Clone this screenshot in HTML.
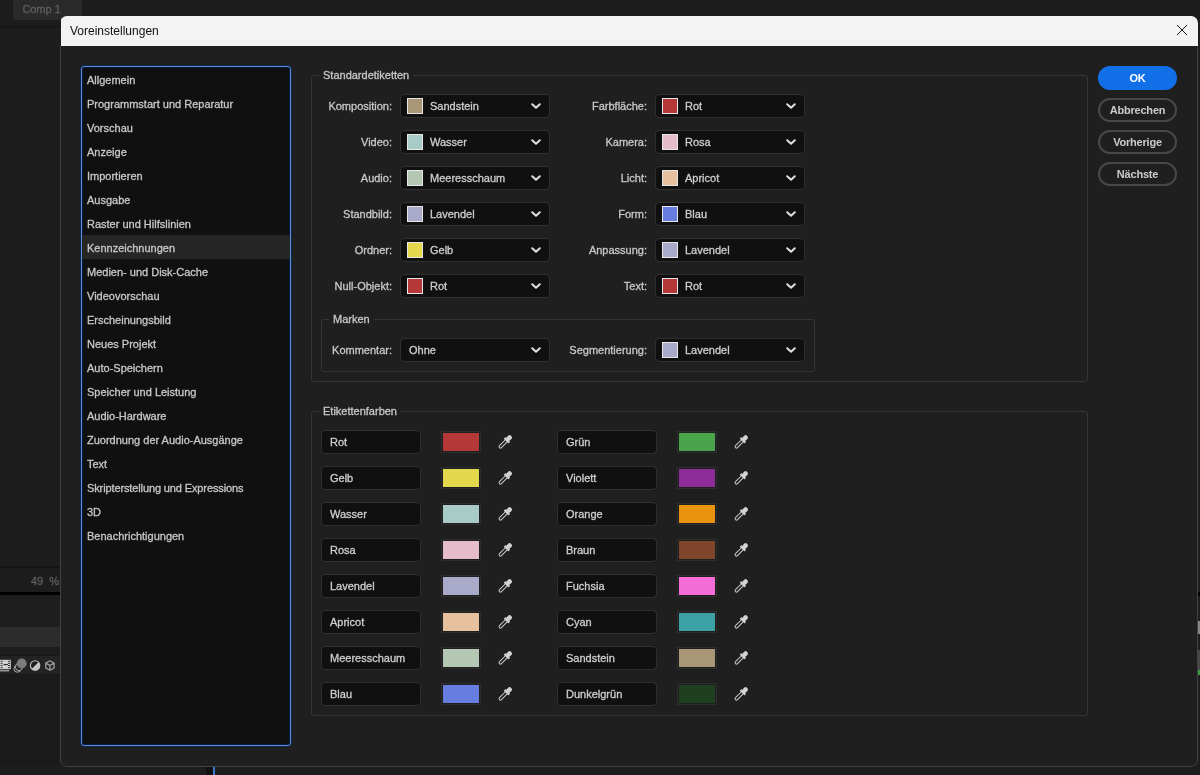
<!DOCTYPE html>
<html lang="de">
<head>
<meta charset="utf-8">
<title>Voreinstellungen</title>
<style>
*{box-sizing:border-box;margin:0;padding:0}
html,body{width:1200px;height:775px;overflow:hidden;background:#1d1d1d;font-family:"Liberation Sans",sans-serif;font-size:11px;color:#c9c9c9}
#root{position:absolute;left:0;top:0;width:1200px;height:775px;will-change:transform;-webkit-text-stroke-width:0.3px}
.abs{position:absolute}
#bg{position:absolute;left:0;top:0;width:1200px;height:775px;background:#1d1d1d;overflow:hidden}
#dlg{position:absolute;left:60px;top:16px;width:1137.5px;height:750.5px;background:#1f1f1f;border-radius:7px;overflow:hidden}
#frame{position:absolute;left:0;top:30px;right:0;bottom:0;border:1px solid #424242;border-top:none;border-radius:0 0 7px 7px}
#title{-webkit-text-stroke-width:0;position:absolute;left:1px;top:0;width:100%;height:30px;background:#f3f3f3;color:#111;font-size:12px;line-height:30px;padding-left:9px}
#side{position:absolute;left:81px;top:66px;width:210px;height:680px;background:#101010;border:1px solid #5a8fd8;border-radius:3px;overflow:hidden;box-shadow:0 0 0 1px rgba(0,40,105,.55),inset 0 0 0 1px rgba(0,35,95,.55)}
#side div{height:24px;line-height:26px;padding-left:5px;color:#c8c8c8;white-space:nowrap;margin-top:0}
#side div.sel{background:#262626}
.fs{position:absolute;border:1px solid #353535;border-radius:3px}
.lg{position:absolute;background:#1f1f1f;padding:0 4px;line-height:14px;height:14px;color:#c8c8c8;white-space:nowrap}
.lbl{position:absolute;text-align:right;white-space:nowrap;line-height:24px;height:24px;color:#c8c8c8}
.dd{position:absolute;width:150px;height:24px;background:#101010;border:1px solid #2f2f2f;border-radius:4px;line-height:23px;color:#cecece;white-space:nowrap}
.dd i{position:absolute;left:6px;top:3px;width:16px;height:16px;border:1px solid #e6e6e6}
.dd span{position:absolute;left:29px;top:0}
.dd svg{position:absolute;right:8px;top:8px}
.inp{position:absolute;width:100px;height:24px;background:#101010;border:1px solid #2f2f2f;border-radius:4px;line-height:23px;padding-left:8px;color:#cecece}
.sw{position:absolute;width:40px;height:22px;border:1px solid #2d2d2d;padding:1px;background:#1f1f1f}
.sw b{display:block;width:100%;height:100%}
.ed{position:absolute;width:16px;height:16px}
.btn{-webkit-text-stroke-width:0;position:absolute;left:1098px;width:79px;height:24px;border:2px solid #484848;border-radius:12px;text-align:center;line-height:20px;font-weight:bold;color:#cbcbcb;font-size:11px;letter-spacing:-0.2px}
.btn.ok{background:#1170e8;border-color:#1170e8;color:#fff}
</style>
</head>
<body>
<div id="root">
<div id="bg"><div class="abs" style="left:0;top:0;width:1200px;height:27px;background:#1c1c1c"></div>
<div class="abs" style="left:13px;top:0;width:69px;height:20px;background:#2a2a2a;border-radius:0 0 3px 3px;color:#5e5e5e;font-size:11px;line-height:19px;padding-left:9.5px;letter-spacing:-0.1px">Comp 1</div>
<div class="abs" style="left:0;top:26px;width:1200px;height:2px;background:#161616"></div>
<div class="abs" style="left:0;top:28px;width:61px;height:747px;background:#1d1d1d"></div>
<div class="abs" style="left:0;top:566px;width:61px;height:2px;background:#141414"></div>
<div class="abs" style="left:31px;top:575px;color:#5e5e5e;font-size:11px;white-space:nowrap">49&nbsp;&nbsp;%</div>
<div class="abs" style="left:0;top:592px;width:61px;height:4px;background:#000"></div>
<div class="abs" style="left:0;top:595px;width:61px;height:32px;background:#1e1e1e"></div>
<div class="abs" style="left:0;top:627px;width:61px;height:20px;background:#2c2c2c"></div>
<div class="abs" style="left:0;top:647px;width:61px;height:8px;background:#1e1e1e"></div>
<div class="abs" style="left:0;top:655px;width:61px;height:20px;background:#232323;border-top:1px solid #171717;border-bottom:1px solid #171717"></div>
<div class="abs" style="left:0;top:675px;width:61px;height:100px;background:#1b1b1b"></div>
<svg class="abs" style="left:0;top:650px" width="61" height="32" viewBox="0 0 61 32"><rect x="-1" y="9.8" width="11.8" height="9.4" fill="#cfcfcf"/><rect x="-1" y="20.3" width="10.2" height="1" fill="#cfcfcf"/><path d="M0.6 11.3h2M0.6 13.4h2M0.6 15.5h2M0.6 17.6h2M8 11.3h2M8 13.4h2M8 15.5h2M8 17.6h2" stroke="#3a3a3a" stroke-width="1"/><rect x="3.6" y="14" width="4.2" height="1.1" fill="#2a2a2a"/><circle cx="17.4" cy="18.8" r="3.4" fill="none" stroke="#a8a8a8" stroke-width="1"/><circle cx="19" cy="17" r="3.6" fill="#232323" stroke="#a8a8a8" stroke-width="1"/><circle cx="21.7" cy="13.5" r="4.9" fill="#7c7c7c"/><circle cx="35.1" cy="15.5" r="4.7" fill="#1e1e1e" stroke="#c4c4c4" stroke-width="1.1"/><path d="M38.6 12 A4.95 4.95 0 0 1 31.6 19 Z" fill="#c4c4c4"/><path d="M49.9 10.8 L54.1 13.1 L54.1 17.9 L49.9 20.2 L45.7 17.9 L45.7 13.1 Z M45.7 13.1 L49.9 15.4 L54.1 13.1 M49.9 15.4 L49.9 20.2" fill="none" stroke="#9a9a9a" stroke-width="1.3" stroke-linejoin="round"/></svg>
<div class="abs" style="left:1197px;top:28px;width:3px;height:747px;background:#1e1e1e"></div>
<div class="abs" style="left:1197px;top:592px;width:3px;height:4px;background:#000"></div>
<div class="abs" style="left:1197px;top:621px;width:3px;height:13px;background:#868686"></div>
<div class="abs" style="left:1197px;top:650px;width:3px;height:20px;background:#484848"></div>
<div class="abs" style="left:1197px;top:670px;width:3px;height:5px;background:#3a9c40"></div>
<div class="abs" style="left:0;top:766px;width:1200px;height:9px;background:#1d1d1d"></div>
<div class="abs" style="left:206px;top:766px;width:7px;height:9px;background:#111"></div>
<div class="abs" style="left:213px;top:766px;width:2px;height:9px;background:#3a78cf"></div></div>
<div id="dlg"><div id="frame"></div><div id="title">Voreinstellungen</div><svg style="position:absolute;left:1116px;top:8px" width="12" height="12" viewBox="0 0 12 12"><path d="M1 1 L11 11 M11 1 L1 11" stroke="#111" stroke-width="0.95" fill="none"/></svg></div>
<div id="side">
<div>Allgemein</div><div>Programmstart und Reparatur</div><div>Vorschau</div><div>Anzeige</div><div>Importieren</div><div>Ausgabe</div><div>Raster und Hilfslinien</div><div class="sel">Kennzeichnungen</div><div>Medien- und Disk-Cache</div><div>Videovorschau</div><div>Erscheinungsbild</div><div>Neues Projekt</div><div>Auto-Speichern</div><div>Speicher und Leistung</div><div>Audio-Hardware</div><div>Zuordnung der Audio-Ausgänge</div><div>Text</div><div style="letter-spacing:-0.12px">Skripterstellung und Expressions</div><div>3D</div><div>Benachrichtigungen</div>
</div>
<div class="fs" style="left:311px;top:75px;width:777px;height:307px"></div>
<div class="lg" style="left:319px;top:68px">Standardetiketten</div>
<div class="lbl" style="left:272px;width:120px;top:94px">Komposition:</div>
<div class="dd" style="left:400px;top:94px"><i style="background:#a89677"></i><span>Sandstein</span><svg width="10" height="6" viewBox="0 0 10 6"><path d="M1.2 1.2 L5 4.8 L8.8 1.2" fill="none" stroke="#dedede" stroke-width="2" stroke-linecap="round" stroke-linejoin="round"/></svg></div>
<div class="lbl" style="left:272px;width:120px;top:130px">Video:</div>
<div class="dd" style="left:400px;top:130px"><i style="background:#a9cbc7"></i><span>Wasser</span><svg width="10" height="6" viewBox="0 0 10 6"><path d="M1.2 1.2 L5 4.8 L8.8 1.2" fill="none" stroke="#dedede" stroke-width="2" stroke-linecap="round" stroke-linejoin="round"/></svg></div>
<div class="lbl" style="left:272px;width:120px;top:166px">Audio:</div>
<div class="dd" style="left:400px;top:166px"><i style="background:#b3c7b3"></i><span>Meeresschaum</span><svg width="10" height="6" viewBox="0 0 10 6"><path d="M1.2 1.2 L5 4.8 L8.8 1.2" fill="none" stroke="#dedede" stroke-width="2" stroke-linecap="round" stroke-linejoin="round"/></svg></div>
<div class="lbl" style="left:272px;width:120px;top:202px">Standbild:</div>
<div class="dd" style="left:400px;top:202px"><i style="background:#a9a9ca"></i><span>Lavendel</span><svg width="10" height="6" viewBox="0 0 10 6"><path d="M1.2 1.2 L5 4.8 L8.8 1.2" fill="none" stroke="#dedede" stroke-width="2" stroke-linecap="round" stroke-linejoin="round"/></svg></div>
<div class="lbl" style="left:272px;width:120px;top:238px">Ordner:</div>
<div class="dd" style="left:400px;top:238px"><i style="background:#e4d84c"></i><span>Gelb</span><svg width="10" height="6" viewBox="0 0 10 6"><path d="M1.2 1.2 L5 4.8 L8.8 1.2" fill="none" stroke="#dedede" stroke-width="2" stroke-linecap="round" stroke-linejoin="round"/></svg></div>
<div class="lbl" style="left:272px;width:120px;top:274px">Null-Objekt:</div>
<div class="dd" style="left:400px;top:274px"><i style="background:#b53838"></i><span>Rot</span><svg width="10" height="6" viewBox="0 0 10 6"><path d="M1.2 1.2 L5 4.8 L8.8 1.2" fill="none" stroke="#dedede" stroke-width="2" stroke-linecap="round" stroke-linejoin="round"/></svg></div>
<div class="lbl" style="left:527px;width:120px;top:94px">Farbfläche:</div>
<div class="dd" style="left:655px;top:94px"><i style="background:#b53838"></i><span>Rot</span><svg width="10" height="6" viewBox="0 0 10 6"><path d="M1.2 1.2 L5 4.8 L8.8 1.2" fill="none" stroke="#dedede" stroke-width="2" stroke-linecap="round" stroke-linejoin="round"/></svg></div>
<div class="lbl" style="left:527px;width:120px;top:130px">Kamera:</div>
<div class="dd" style="left:655px;top:130px"><i style="background:#e5bcc9"></i><span>Rosa</span><svg width="10" height="6" viewBox="0 0 10 6"><path d="M1.2 1.2 L5 4.8 L8.8 1.2" fill="none" stroke="#dedede" stroke-width="2" stroke-linecap="round" stroke-linejoin="round"/></svg></div>
<div class="lbl" style="left:527px;width:120px;top:166px">Licht:</div>
<div class="dd" style="left:655px;top:166px"><i style="background:#e7c19e"></i><span>Apricot</span><svg width="10" height="6" viewBox="0 0 10 6"><path d="M1.2 1.2 L5 4.8 L8.8 1.2" fill="none" stroke="#dedede" stroke-width="2" stroke-linecap="round" stroke-linejoin="round"/></svg></div>
<div class="lbl" style="left:527px;width:120px;top:202px">Form:</div>
<div class="dd" style="left:655px;top:202px"><i style="background:#677de0"></i><span>Blau</span><svg width="10" height="6" viewBox="0 0 10 6"><path d="M1.2 1.2 L5 4.8 L8.8 1.2" fill="none" stroke="#dedede" stroke-width="2" stroke-linecap="round" stroke-linejoin="round"/></svg></div>
<div class="lbl" style="left:527px;width:120px;top:238px">Anpassung:</div>
<div class="dd" style="left:655px;top:238px"><i style="background:#a9a9ca"></i><span>Lavendel</span><svg width="10" height="6" viewBox="0 0 10 6"><path d="M1.2 1.2 L5 4.8 L8.8 1.2" fill="none" stroke="#dedede" stroke-width="2" stroke-linecap="round" stroke-linejoin="round"/></svg></div>
<div class="lbl" style="left:527px;width:120px;top:274px">Text:</div>
<div class="dd" style="left:655px;top:274px"><i style="background:#b53838"></i><span>Rot</span><svg width="10" height="6" viewBox="0 0 10 6"><path d="M1.2 1.2 L5 4.8 L8.8 1.2" fill="none" stroke="#dedede" stroke-width="2" stroke-linecap="round" stroke-linejoin="round"/></svg></div>
<div class="fs" style="left:321px;top:319px;width:494px;height:53px"></div>
<div class="lg" style="left:329px;top:312px">Marken</div>
<div class="lbl" style="left:272px;width:120px;top:338px">Kommentar:</div>
<div class="dd" style="left:400px;top:338px"><span style="left:8px">Ohne</span><svg width="10" height="6" viewBox="0 0 10 6"><path d="M1.2 1.2 L5 4.8 L8.8 1.2" fill="none" stroke="#dedede" stroke-width="2" stroke-linecap="round" stroke-linejoin="round"/></svg></div>
<div class="lbl" style="left:527px;width:120px;top:338px">Segmentierung:</div>
<div class="dd" style="left:655px;top:338px"><i style="background:#a9a9ca"></i><span>Lavendel</span><svg width="10" height="6" viewBox="0 0 10 6"><path d="M1.2 1.2 L5 4.8 L8.8 1.2" fill="none" stroke="#dedede" stroke-width="2" stroke-linecap="round" stroke-linejoin="round"/></svg></div>
<div class="fs" style="left:311px;top:411px;width:777px;height:305px"></div>
<div class="lg" style="left:319px;top:404px">Etikettenfarben</div>
<div class="inp" style="left:321px;top:430px">Rot</div>
<div class="sw" style="left:441px;top:431px"><b style="background:#b53838"></b></div>
<svg class="ed" style="left:492px;top:430px;width:26px;height:24px" width="26" height="24" viewBox="0 0 26 24"><g transform="translate(7.1,18.05) rotate(45)"><path d="M-1.4 -10 L-1.4 -1.95 A1.4 1.4 0 0 0 1.4 -1.95 L1.4 -10" fill="none" stroke="#cdcdcd" stroke-width="1"/><rect x="-3.4" y="-12.2" width="6.8" height="2.3" rx="0.7" fill="#d2d2d2"/><rect x="-2.3" y="-17.1" width="4.6" height="6" rx="2.2" fill="#d2d2d2"/></g></svg>
<div class="inp" style="left:321px;top:466px">Gelb</div>
<div class="sw" style="left:441px;top:467px"><b style="background:#e4d84c"></b></div>
<svg class="ed" style="left:492px;top:466px;width:26px;height:24px" width="26" height="24" viewBox="0 0 26 24"><g transform="translate(7.1,18.05) rotate(45)"><path d="M-1.4 -10 L-1.4 -1.95 A1.4 1.4 0 0 0 1.4 -1.95 L1.4 -10" fill="none" stroke="#cdcdcd" stroke-width="1"/><rect x="-3.4" y="-12.2" width="6.8" height="2.3" rx="0.7" fill="#d2d2d2"/><rect x="-2.3" y="-17.1" width="4.6" height="6" rx="2.2" fill="#d2d2d2"/></g></svg>
<div class="inp" style="left:321px;top:502px">Wasser</div>
<div class="sw" style="left:441px;top:503px"><b style="background:#a9cbc7"></b></div>
<svg class="ed" style="left:492px;top:502px;width:26px;height:24px" width="26" height="24" viewBox="0 0 26 24"><g transform="translate(7.1,18.05) rotate(45)"><path d="M-1.4 -10 L-1.4 -1.95 A1.4 1.4 0 0 0 1.4 -1.95 L1.4 -10" fill="none" stroke="#cdcdcd" stroke-width="1"/><rect x="-3.4" y="-12.2" width="6.8" height="2.3" rx="0.7" fill="#d2d2d2"/><rect x="-2.3" y="-17.1" width="4.6" height="6" rx="2.2" fill="#d2d2d2"/></g></svg>
<div class="inp" style="left:321px;top:538px">Rosa</div>
<div class="sw" style="left:441px;top:539px"><b style="background:#e5bcc9"></b></div>
<svg class="ed" style="left:492px;top:538px;width:26px;height:24px" width="26" height="24" viewBox="0 0 26 24"><g transform="translate(7.1,18.05) rotate(45)"><path d="M-1.4 -10 L-1.4 -1.95 A1.4 1.4 0 0 0 1.4 -1.95 L1.4 -10" fill="none" stroke="#cdcdcd" stroke-width="1"/><rect x="-3.4" y="-12.2" width="6.8" height="2.3" rx="0.7" fill="#d2d2d2"/><rect x="-2.3" y="-17.1" width="4.6" height="6" rx="2.2" fill="#d2d2d2"/></g></svg>
<div class="inp" style="left:321px;top:574px">Lavendel</div>
<div class="sw" style="left:441px;top:575px"><b style="background:#a9a9ca"></b></div>
<svg class="ed" style="left:492px;top:574px;width:26px;height:24px" width="26" height="24" viewBox="0 0 26 24"><g transform="translate(7.1,18.05) rotate(45)"><path d="M-1.4 -10 L-1.4 -1.95 A1.4 1.4 0 0 0 1.4 -1.95 L1.4 -10" fill="none" stroke="#cdcdcd" stroke-width="1"/><rect x="-3.4" y="-12.2" width="6.8" height="2.3" rx="0.7" fill="#d2d2d2"/><rect x="-2.3" y="-17.1" width="4.6" height="6" rx="2.2" fill="#d2d2d2"/></g></svg>
<div class="inp" style="left:321px;top:610px">Apricot</div>
<div class="sw" style="left:441px;top:611px"><b style="background:#e7c19e"></b></div>
<svg class="ed" style="left:492px;top:610px;width:26px;height:24px" width="26" height="24" viewBox="0 0 26 24"><g transform="translate(7.1,18.05) rotate(45)"><path d="M-1.4 -10 L-1.4 -1.95 A1.4 1.4 0 0 0 1.4 -1.95 L1.4 -10" fill="none" stroke="#cdcdcd" stroke-width="1"/><rect x="-3.4" y="-12.2" width="6.8" height="2.3" rx="0.7" fill="#d2d2d2"/><rect x="-2.3" y="-17.1" width="4.6" height="6" rx="2.2" fill="#d2d2d2"/></g></svg>
<div class="inp" style="left:321px;top:646px">Meeresschaum</div>
<div class="sw" style="left:441px;top:647px"><b style="background:#b3c7b3"></b></div>
<svg class="ed" style="left:492px;top:646px;width:26px;height:24px" width="26" height="24" viewBox="0 0 26 24"><g transform="translate(7.1,18.05) rotate(45)"><path d="M-1.4 -10 L-1.4 -1.95 A1.4 1.4 0 0 0 1.4 -1.95 L1.4 -10" fill="none" stroke="#cdcdcd" stroke-width="1"/><rect x="-3.4" y="-12.2" width="6.8" height="2.3" rx="0.7" fill="#d2d2d2"/><rect x="-2.3" y="-17.1" width="4.6" height="6" rx="2.2" fill="#d2d2d2"/></g></svg>
<div class="inp" style="left:321px;top:682px">Blau</div>
<div class="sw" style="left:441px;top:683px"><b style="background:#677de0"></b></div>
<svg class="ed" style="left:492px;top:682px;width:26px;height:24px" width="26" height="24" viewBox="0 0 26 24"><g transform="translate(7.1,18.05) rotate(45)"><path d="M-1.4 -10 L-1.4 -1.95 A1.4 1.4 0 0 0 1.4 -1.95 L1.4 -10" fill="none" stroke="#cdcdcd" stroke-width="1"/><rect x="-3.4" y="-12.2" width="6.8" height="2.3" rx="0.7" fill="#d2d2d2"/><rect x="-2.3" y="-17.1" width="4.6" height="6" rx="2.2" fill="#d2d2d2"/></g></svg>
<div class="inp" style="left:557px;top:430px">Grün</div>
<div class="sw" style="left:677px;top:431px"><b style="background:#4aa44c"></b></div>
<svg class="ed" style="left:728px;top:430px;width:26px;height:24px" width="26" height="24" viewBox="0 0 26 24"><g transform="translate(7.1,18.05) rotate(45)"><path d="M-1.4 -10 L-1.4 -1.95 A1.4 1.4 0 0 0 1.4 -1.95 L1.4 -10" fill="none" stroke="#cdcdcd" stroke-width="1"/><rect x="-3.4" y="-12.2" width="6.8" height="2.3" rx="0.7" fill="#d2d2d2"/><rect x="-2.3" y="-17.1" width="4.6" height="6" rx="2.2" fill="#d2d2d2"/></g></svg>
<div class="inp" style="left:557px;top:466px">Violett</div>
<div class="sw" style="left:677px;top:467px"><b style="background:#8e2c9a"></b></div>
<svg class="ed" style="left:728px;top:466px;width:26px;height:24px" width="26" height="24" viewBox="0 0 26 24"><g transform="translate(7.1,18.05) rotate(45)"><path d="M-1.4 -10 L-1.4 -1.95 A1.4 1.4 0 0 0 1.4 -1.95 L1.4 -10" fill="none" stroke="#cdcdcd" stroke-width="1"/><rect x="-3.4" y="-12.2" width="6.8" height="2.3" rx="0.7" fill="#d2d2d2"/><rect x="-2.3" y="-17.1" width="4.6" height="6" rx="2.2" fill="#d2d2d2"/></g></svg>
<div class="inp" style="left:557px;top:502px">Orange</div>
<div class="sw" style="left:677px;top:503px"><b style="background:#e8920d"></b></div>
<svg class="ed" style="left:728px;top:502px;width:26px;height:24px" width="26" height="24" viewBox="0 0 26 24"><g transform="translate(7.1,18.05) rotate(45)"><path d="M-1.4 -10 L-1.4 -1.95 A1.4 1.4 0 0 0 1.4 -1.95 L1.4 -10" fill="none" stroke="#cdcdcd" stroke-width="1"/><rect x="-3.4" y="-12.2" width="6.8" height="2.3" rx="0.7" fill="#d2d2d2"/><rect x="-2.3" y="-17.1" width="4.6" height="6" rx="2.2" fill="#d2d2d2"/></g></svg>
<div class="inp" style="left:557px;top:538px">Braun</div>
<div class="sw" style="left:677px;top:539px"><b style="background:#7f452a"></b></div>
<svg class="ed" style="left:728px;top:538px;width:26px;height:24px" width="26" height="24" viewBox="0 0 26 24"><g transform="translate(7.1,18.05) rotate(45)"><path d="M-1.4 -10 L-1.4 -1.95 A1.4 1.4 0 0 0 1.4 -1.95 L1.4 -10" fill="none" stroke="#cdcdcd" stroke-width="1"/><rect x="-3.4" y="-12.2" width="6.8" height="2.3" rx="0.7" fill="#d2d2d2"/><rect x="-2.3" y="-17.1" width="4.6" height="6" rx="2.2" fill="#d2d2d2"/></g></svg>
<div class="inp" style="left:557px;top:574px">Fuchsia</div>
<div class="sw" style="left:677px;top:575px"><b style="background:#f46dd6"></b></div>
<svg class="ed" style="left:728px;top:574px;width:26px;height:24px" width="26" height="24" viewBox="0 0 26 24"><g transform="translate(7.1,18.05) rotate(45)"><path d="M-1.4 -10 L-1.4 -1.95 A1.4 1.4 0 0 0 1.4 -1.95 L1.4 -10" fill="none" stroke="#cdcdcd" stroke-width="1"/><rect x="-3.4" y="-12.2" width="6.8" height="2.3" rx="0.7" fill="#d2d2d2"/><rect x="-2.3" y="-17.1" width="4.6" height="6" rx="2.2" fill="#d2d2d2"/></g></svg>
<div class="inp" style="left:557px;top:610px">Cyan</div>
<div class="sw" style="left:677px;top:611px"><b style="background:#3da2a5"></b></div>
<svg class="ed" style="left:728px;top:610px;width:26px;height:24px" width="26" height="24" viewBox="0 0 26 24"><g transform="translate(7.1,18.05) rotate(45)"><path d="M-1.4 -10 L-1.4 -1.95 A1.4 1.4 0 0 0 1.4 -1.95 L1.4 -10" fill="none" stroke="#cdcdcd" stroke-width="1"/><rect x="-3.4" y="-12.2" width="6.8" height="2.3" rx="0.7" fill="#d2d2d2"/><rect x="-2.3" y="-17.1" width="4.6" height="6" rx="2.2" fill="#d2d2d2"/></g></svg>
<div class="inp" style="left:557px;top:646px">Sandstein</div>
<div class="sw" style="left:677px;top:647px"><b style="background:#a89677"></b></div>
<svg class="ed" style="left:728px;top:646px;width:26px;height:24px" width="26" height="24" viewBox="0 0 26 24"><g transform="translate(7.1,18.05) rotate(45)"><path d="M-1.4 -10 L-1.4 -1.95 A1.4 1.4 0 0 0 1.4 -1.95 L1.4 -10" fill="none" stroke="#cdcdcd" stroke-width="1"/><rect x="-3.4" y="-12.2" width="6.8" height="2.3" rx="0.7" fill="#d2d2d2"/><rect x="-2.3" y="-17.1" width="4.6" height="6" rx="2.2" fill="#d2d2d2"/></g></svg>
<div class="inp" style="left:557px;top:682px">Dunkelgrün</div>
<div class="sw" style="left:677px;top:683px"><b style="background:#1e401e"></b></div>
<svg class="ed" style="left:728px;top:682px;width:26px;height:24px" width="26" height="24" viewBox="0 0 26 24"><g transform="translate(7.1,18.05) rotate(45)"><path d="M-1.4 -10 L-1.4 -1.95 A1.4 1.4 0 0 0 1.4 -1.95 L1.4 -10" fill="none" stroke="#cdcdcd" stroke-width="1"/><rect x="-3.4" y="-12.2" width="6.8" height="2.3" rx="0.7" fill="#d2d2d2"/><rect x="-2.3" y="-17.1" width="4.6" height="6" rx="2.2" fill="#d2d2d2"/></g></svg>
<div class="btn ok" style="top:66px">OK</div>
<div class="btn" style="top:98px">Abbrechen</div>
<div class="btn" style="top:130px">Vorherige</div>
<div class="btn" style="top:162px">Nächste</div>
</div>
</body>
</html>
